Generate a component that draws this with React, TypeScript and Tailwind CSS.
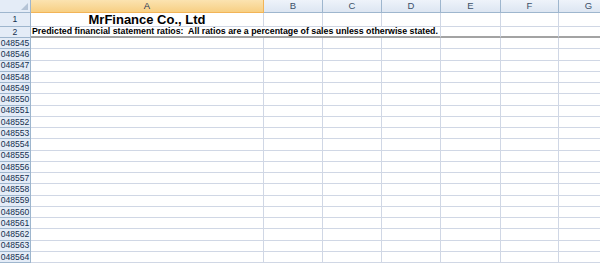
const cols = [
  { key: 'A', w: 'w-[233px]' },
  { key: 'B', w: 'w-[59px]' },
  { key: 'C', w: 'w-[59px]' },
  { key: 'D', w: 'w-[59px]' },
  { key: 'E', w: 'w-[60px]' },
  { key: 'F', w: 'w-[58px]' },
  { key: 'G', w: 'w-[60px]' },
]

const rows = Array.from({ length: 20 }, (_, i) => String(48545 + i).padStart(6, '0'))

function RowHead({ label, h }: { label: string; h: string }) {
  return (
    <div
      className={`${h} w-[31px] shrink-0 flex items-center justify-center border-r border-b border-[#9eb6ce] bg-[#e4ecf7] text-[8.6px] leading-none text-[#15304f] overflow-hidden`}
    >
      {label}
    </div>
  )
}

export default function App() {
  return (
    <div
      className="w-[600px] h-[263px] overflow-hidden bg-white"
      style={{ fontFamily: '"Liberation Sans", Arial, sans-serif' }}
    >
      {/* column headers */}
      <div className="flex h-[13px]">
        <div className="relative w-[31px] shrink-0 border-r border-b border-[#9eb6ce] bg-[#e4ecf7]">
          <svg className="absolute right-[2px] bottom-[2px]" width="7" height="7" viewBox="0 0 7 7">
            <polygon points="7,0 7,7 0,7" fill="#b4c3d6" />
          </svg>
        </div>
        {cols.map((c) => (
          <div
            key={c.key}
            className={`${c.w} shrink-0 flex items-center justify-center border-r border-b text-[9.5px] leading-none ${
              c.key === 'A'
                ? 'bg-gradient-to-b from-[#fbe3b0] to-[#f7cf83] border-[#f2b457] text-[#1f3553]'
                : 'bg-gradient-to-b from-[#eef3fa] to-[#dde6f2] border-[#9eb6ce] text-[#3b4f68]'
            }`}
          >
            {c.key}
          </div>
        ))}
      </div>

      {/* row 1 */}
      <div className="flex h-[14px]">
        <RowHead label="1" h="h-[14px]" />
        {cols.map((c) => (
          <div
            key={c.key}
            className={`${c.w} shrink-0 flex items-center justify-center border-r border-b border-[#d0d7e5] text-[13px] font-bold leading-none text-black whitespace-nowrap`}
          >
            {c.key === 'A' ? 'MrFinance Co., Ltd' : ''}
          </div>
        ))}
      </div>

      {/* row 2 */}
      <div className="flex h-[11px]">
        <RowHead label="2" h="h-[11px]" />
        <div className="w-[410px] shrink-0 flex items-center pl-[1px] border-r border-b-2 border-b-[#a3a3a3] border-r-[#d0d7e5] text-[8.8px] font-bold leading-none text-black whitespace-nowrap">
          Predicted financial statement ratios:&nbsp; All ratios are a percentage of sales unless otherwise stated.
        </div>
        {cols.slice(4).map((c) => (
          <div
            key={c.key}
            className={`${c.w} shrink-0 border-r border-r-[#d0d7e5] border-b-2 border-b-[#a3a3a3]`}
          />
        ))}
      </div>

      {/* data rows */}
      {rows.map((r) => (
        <div key={r} className="flex h-[11.25px]">
          <RowHead label={r} h="h-[11.25px]" />
          {cols.map((c) => (
            <div key={c.key} className={`${c.w} shrink-0 border-r border-b border-[#d0d7e5]`} />
          ))}
        </div>
      ))}
    </div>
  )
}
